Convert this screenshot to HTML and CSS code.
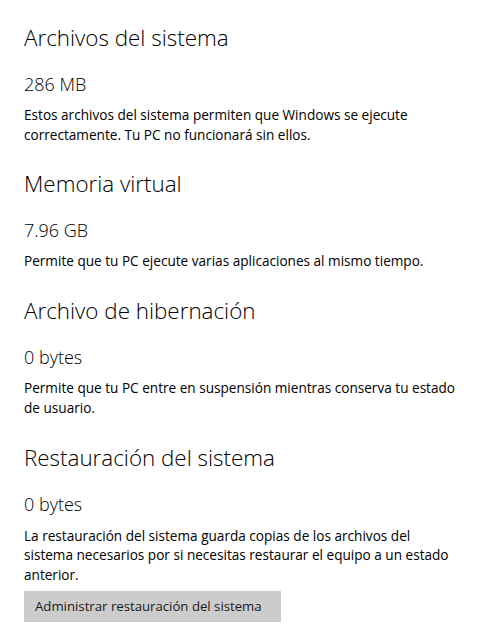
FILE: index.html
```html
<!DOCTYPE html>
<html lang="es">
<head>
    <meta charset="UTF-8">
    <meta name="viewport" content="width=device-width, initial-scale=1.0">
    <title>Archivos del sistema</title>
    <link rel="stylesheet" href="styles.css">
</head>
<body>
    <div class="page">
        <div class="group">
            <h2>Archivos del sistema</h2>
            <div class="size">286 MB</div>
            <p>Estos archivos del sistema permiten que Windows se ejecute correctamente. Tu PC no funcionará sin ellos.</p>
        </div>

        <div class="group">
            <h2>Memoria virtual</h2>
            <div class="size">7.96 GB</div>
            <p>Permite que tu PC ejecute varias aplicaciones al mismo tiempo.</p>
        </div>

        <div class="group">
            <h2>Archivo de hibernación</h2>
            <div class="size">0 bytes</div>
            <p>Permite que tu PC entre en suspensión mientras conserva tu estado de usuario.</p>
        </div>

        <div class="group">
            <h2>Restauración del sistema</h2>
            <div class="size">0 bytes</div>
            <p class="narrow">La restauración del sistema guarda copias de los archivos del sistema necesarios por si necesitas restaurar el equipo a un estado anterior.</p>
            <button>Administrar restauración del sistema</button>
        </div>
    </div>
</body>
</html>
```

FILE: styles.css
```css
body {
    margin: 0;
    background: #ffffff;
    color: #000000;
    font-family: "Open Sans", "Noto Sans", sans-serif;
}
.page {
    padding: 24px 18px 0 24px;
    max-width: 450px;
}
.group { margin-bottom: 26px; }
h2 {
    margin: 0;
    font-size: 22.4px;
    font-weight: 300;
    line-height: 28px;
}
.size {
    margin-top: 21px;
    font-size: 18px;
    font-weight: 300;
    line-height: 22px;
}
p {
    margin: 10px 0 0;
    font-size: 13.6px;
    line-height: 19.7px;
}
p.narrow { max-width: 436px; margin-top: 11px; }
button {
    margin-top: 6px;
    width: 257px;
    height: 31px;
    padding: 0 0 0 11px;
    background: #cccccc;
    color: #1a1a1a;
    border: none;
    text-align: left;
    font-family: inherit;
    font-size: 13.2px;
}
```
